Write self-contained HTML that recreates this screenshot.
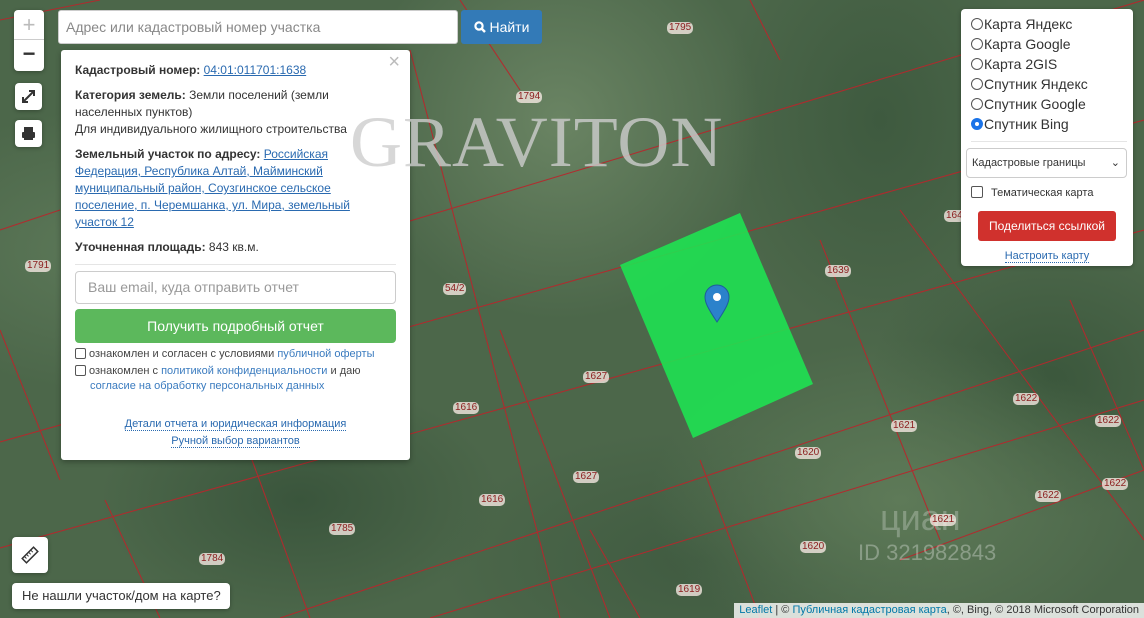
<!DOCTYPE html>
<html><head><meta charset="utf-8"><style>
*{box-sizing:border-box}
body{margin:0;width:1144px;height:618px;overflow:hidden;font-family:"Liberation Sans",Arial,sans-serif;position:relative;background:#4f6b4d}
.map{position:absolute;inset:0;background:
radial-gradient(ellipse 200px 120px at 300px 500px,#3a553c,transparent),
radial-gradient(ellipse 250px 160px at 900px 500px,#5e7a58,transparent),
radial-gradient(ellipse 200px 200px at 560px 120px,#6a8463,transparent),
radial-gradient(ellipse 180px 140px at 1050px 380px,#3b573c,transparent),
radial-gradient(ellipse 220px 140px at 100px 250px,#5c7858,transparent),
radial-gradient(ellipse 260px 130px at 700px 560px,#405b41,transparent),
radial-gradient(ellipse 160px 220px at 880px 120px,#3e5a3f,transparent),
#4c674a}
.lbl{position:absolute;font-size:10px;color:#8b1d1d;background:rgba(255,240,235,.75);border-radius:5px;padding:0 2px;line-height:12px}
.ctl{position:absolute;background:#fff;border-radius:4px;box-shadow:0 1px 4px rgba(0,0,0,.3)}
a{color:#2a6ab0}
.pop{position:absolute;left:61px;top:50px;width:349px;height:410px;background:#fff;border-radius:3px;box-shadow:0 2px 6px rgba(0,0,0,.3);padding:12px 14px;font-size:12px;color:#333;line-height:17px}
.pop b{font-weight:bold}
.pop a{text-decoration:underline}
.cb{display:inline-block;width:11px;height:11px;border:1px solid #555;border-radius:2px;vertical-align:-2px;margin-right:3px;background:#fff}
.rad{display:inline-block;width:12px;height:12px;border:1px solid #555;border-radius:50%;vertical-align:-1px;margin-right:1px}
</style></head><body>
<div class="map"></div>
<svg width="1144" height="618" style="position:absolute;left:0;top:0">
<g stroke="#b8262c" stroke-width="1.1" fill="none" opacity=".9">
<line x1="0" y1="442" x2="1144" y2="120"/>
<line x1="0" y1="548" x2="1144" y2="230"/>
<line x1="280" y1="618" x2="1144" y2="330"/>
<line x1="100" y1="0" x2="0" y2="20"/>
<line x1="380" y1="230" x2="1144" y2="0"/>
<line x1="430" y1="618" x2="1144" y2="400"/>
<line x1="0" y1="230" x2="60" y2="210"/>
<line x1="410" y1="50" x2="560" y2="618"/>
<line x1="230" y1="400" x2="310" y2="618"/>
<line x1="0" y1="330" x2="60" y2="480"/>
<line x1="105" y1="500" x2="160" y2="618"/>
<line x1="500" y1="330" x2="610" y2="618"/>
<line x1="700" y1="460" x2="760" y2="618"/>
<line x1="820" y1="240" x2="940" y2="540"/>
<line x1="900" y1="210" x2="1144" y2="540"/>
<line x1="1070" y1="300" x2="1144" y2="470"/>
<line x1="460" y1="0" x2="520" y2="90"/>
<line x1="750" y1="0" x2="780" y2="60"/>
<line x1="590" y1="530" x2="640" y2="618"/>
<line x1="900" y1="560" x2="1144" y2="470"/>
</g>
<polygon points="620,265 740,213 813,384 693,438" fill="#1ee552" opacity=".88"/>
<path d="M717 322 C707 307 705 302 705 297 A12 12 0 0 1 729 297 C729 302 727 307 717 322Z" fill="#2b82cb" stroke="#1d5f9a"/>
<circle cx="717" cy="297" r="4" fill="#fff"/>
<text x="858" y="560" font-family="Liberation Sans" font-size="22" fill="#fff" opacity=".3">ID 321982843</text>
<text x="880" y="530" font-family="Liberation Sans" font-size="36" fill="#fff" opacity=".25">циан</text>
</svg>
<div class="lbl" style="left:667px;top:22px">1795</div>
<div class="lbl" style="left:516px;top:91px">1794</div>
<div class="lbl" style="left:25px;top:260px">1791</div>
<div class="lbl" style="left:443px;top:283px">54/2</div>
<div class="lbl" style="left:825px;top:265px">1639</div>
<div class="lbl" style="left:944px;top:210px">164</div>
<div class="lbl" style="left:583px;top:371px">1627</div>
<div class="lbl" style="left:453px;top:402px">1616</div>
<div class="lbl" style="left:479px;top:494px">1616</div>
<div class="lbl" style="left:573px;top:471px">1627</div>
<div class="lbl" style="left:1013px;top:393px">1622</div>
<div class="lbl" style="left:891px;top:420px">1621</div>
<div class="lbl" style="left:795px;top:447px">1620</div>
<div class="lbl" style="left:1035px;top:490px">1622</div>
<div class="lbl" style="left:1102px;top:478px">1622</div>
<div class="lbl" style="left:930px;top:514px">1621</div>
<div class="lbl" style="left:800px;top:541px">1620</div>
<div class="lbl" style="left:329px;top:523px">1785</div>
<div class="lbl" style="left:199px;top:553px">1784</div>
<div class="lbl" style="left:676px;top:584px">1619</div>
<div class="lbl" style="left:1095px;top:415px">1622</div>

<div class="ctl" style="left:14px;top:10px;width:30px;height:61px">
<div style="height:30px;border-bottom:1px solid #ccc;text-align:center;font-size:22px;line-height:30px;color:#bbb">+</div>
<div style="height:30px;text-align:center;font-size:22px;line-height:28px;color:#333;font-weight:bold">−</div></div>
<div class="ctl" style="left:15px;top:83px;width:27px;height:27px"><svg width="27" height="27"><path d="M9 18 L18 9 M14 8 H19 V13 M8 14 V19 H13" stroke="#333" stroke-width="2" fill="none"/></svg></div>
<div class="ctl" style="left:15px;top:120px;width:27px;height:27px"><svg width="27" height="27"><rect x="9" y="7" width="9" height="5" fill="#333"/><rect x="7" y="12" width="13" height="6" rx="1" fill="#333"/><rect x="9" y="16" width="9" height="4" fill="#333"/></svg></div>
<div class="ctl" style="left:12px;top:537px;width:36px;height:36px"><svg width="36" height="36"><g transform="rotate(-45 18 18)"><rect x="10" y="15" width="16" height="6" fill="none" stroke="#333" stroke-width="1.5"/><path d="M13 15v3M16 15v3M19 15v3M22 15v3" stroke="#333"/></g></svg></div>
<div class="ctl" style="left:12px;top:583px;width:218px;height:26px;font-size:13px;line-height:26px;padding-left:10px;color:#333">Не нашли участок/дом на карте?</div>

<div style="position:absolute;left:58px;top:10px;width:400px;height:34px;background:#fff;border-radius:3px;border:1px solid #ccc;font-size:14px;color:#888;line-height:32px;padding-left:7px">Адрес или кадастровый номер участка</div>
<div style="position:absolute;left:461px;top:10px;width:81px;height:34px;background:#337ab7;border-radius:3px;color:#fff;font-size:14px;line-height:34px;text-align:center"><svg width="12" height="12" style="vertical-align:-1px"><circle cx="5" cy="5" r="3.6" stroke="#fff" stroke-width="2.2" fill="none"/><path d="M7.5 7.5L11 11" stroke="#fff" stroke-width="2.5"/></svg> Найти</div>

<div class="pop">
<div style="position:absolute;right:10px;top:4px;font-size:20px;color:#bbb">×</div>
<div><b>Кадастровый номер:</b> <a>04:01:011701:1638</a></div>
<div style="margin-top:8px;padding-right:40px"><b>Категория земель:</b> Земли поселений (земли населенных пунктов)</div>
<div>Для индивидуального жилищного строительства</div>
<div style="margin-top:8px;padding-right:40px"><b>Земельный участок по адресу:</b> <a>Российская Федерация, Республика Алтай, Майминский муниципальный район, Соузгинское сельское поселение, п. Черемшанка, ул. Мира, земельный участок 12</a></div>
<div style="margin-top:8px"><b>Уточненная площадь:</b> 843 кв.м.</div>
<div style="border-top:1px solid #e5e5e5;margin-top:8px;padding-top:6px">
<div style="height:33px;border:1px solid #ccc;border-radius:4px;font-size:14px;color:#999;line-height:31px;padding-left:12px">Ваш email, куда отправить отчет</div>
<div style="height:34px;margin-top:5px;background:#5cb85c;border-radius:4px;color:#fff;font-size:14px;line-height:34px;text-align:center">Получить подробный отчет</div>
<div style="font-size:11px;line-height:15px;margin-top:4px;color:#444"><span class="cb"></span>ознакомлен и согласен с условиями <span style="color:#3a7bbf">публичной оферты</span></div>
<div style="font-size:11px;line-height:15px;margin-top:2px;color:#444;padding-left:15px;text-indent:-15px"><span class="cb"></span>ознакомлен с <span style="color:#3a7bbf">политикой конфиденциальности</span> и даю <span style="color:#3a7bbf">согласие на обработку персональных данных</span></div>
<div style="text-align:center;font-size:11px;margin-top:22px;line-height:17px"><span style="color:#2a6ab0;border-bottom:1px dotted #2a6ab0">Детали отчета и юридическая информация</span><br><span style="color:#2a6ab0;border-bottom:1px dotted #2a6ab0">Ручной выбор вариантов</span></div>
</div></div>

<div style="position:absolute;left:350px;top:102px;font-family:'Liberation Serif',serif;font-size:72px;line-height:80px;color:rgba(205,205,205,.8);letter-spacing:1px;pointer-events:none">GRAVITON</div>

<div style="position:absolute;left:961px;top:9px;width:172px;height:257px;background:#fff;border-radius:4px;box-shadow:0 1px 4px rgba(0,0,0,.3);font-size:14px;color:#333;padding:5px 0 0 10px;line-height:20px">
<div><span class="rad"></span>Карта Яндекс</div>
<div><span class="rad"></span>Карта Google</div>
<div><span class="rad"></span>Карта 2GIS</div>
<div><span class="rad"></span>Спутник Яндекс</div>
<div><span class="rad"></span>Спутник Google</div>
<div><span class="rad" style="border:4px solid #1a73e8"></span>Спутник Bing</div>
<div style="border-top:1px solid #e5e5e5;margin:7px 6px 0 0"></div>
<div style="margin-top:6px;width:161px;height:30px;border:1px solid #ccc;border-radius:4px;font-size:11px;line-height:28px;padding-left:5px;position:relative;left:-5px">Кадастровые границы<span style="position:absolute;right:6px;top:0;font-size:11px">&#8964;</span></div>
<div style="font-size:11px;margin-top:5px"><span class="cb" style="width:12px;height:12px;margin-right:8px"></span>Тематическая карта</div>
<div style="margin:8px 0 0 7px;width:138px;height:30px;background:#d0312d;border-radius:3px;color:#fff;font-size:12px;line-height:30px;text-align:center">Поделиться ссылкой</div>
<div style="text-align:center;font-size:11px;margin-top:5px;padding-right:10px"><span style="color:#2a6ab0;border-bottom:1px dotted #2a6ab0">Настроить карту</span></div>
</div>

<div style="position:absolute;right:0;bottom:0;height:15px;background:rgba(255,255,255,.8);font-size:11px;line-height:15px;padding:0 5px;color:#333"><span style="color:#0078a8">Leaflet</span> | © <span style="color:#0078a8">Публичная кадастровая карта</span>, ©, Bing, © 2018 Microsoft Corporation</div>
</body></html>
